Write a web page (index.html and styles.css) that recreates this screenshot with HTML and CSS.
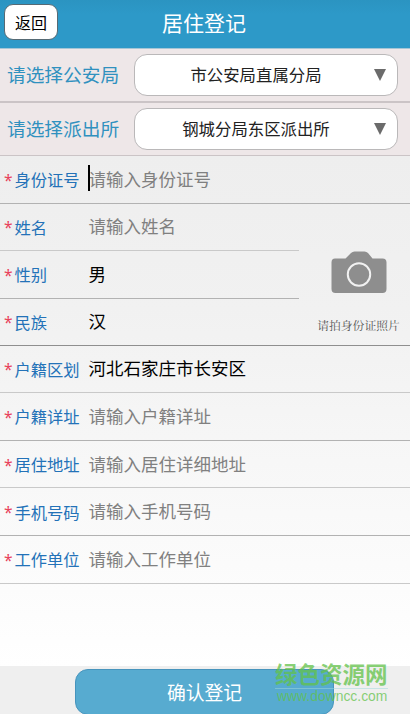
FILE: index.html
```html
<!DOCTYPE html>
<html lang="zh-CN">
<head>
<meta charset="utf-8">
<title>居住登记</title>
<link rel="stylesheet" href="styles.css">
</head>
<body>
<header class="bar"><button class="back">返回</button><h1>居住登记</h1></header>
<section class="choices">
  <div class="choice"><span class="choice-label">请选择公安局</span><div class="select"><span>市公安局直属分局</span><i class="arrow"></i></div></div>
  <div class="choice"><span class="choice-label">请选择派出所</span><div class="select"><span>钢城分局东区派出所</span><i class="arrow"></i></div></div>
</section>
<main class="form">
  <div class="row"><b>*</b><label>身份证号</label><span class="hint focused">请输入身份证号</span></div>
  <div class="person">
    <div class="fields">
      <div class="row light"><b>*</b><label>姓名</label><span class="hint">请输入姓名</span></div>
      <div class="row"><b>*</b><label>性别</label><span>男</span></div>
      <div class="row last"><b>*</b><label>民族</label><span>汉</span></div>
    </div>
    <div class="photo">
      <svg class="camera" viewBox="0 0 56 43"><path fill="#8e8e8e" d="M4 7.500h10.500l5.500-5.500q1.500-1.500 3.500-1.500h10q2 0 3.500 1.500L41.500 7.500H51.500q4 0 4 4V38q0 4-4 4H4.500q-4 0-4-4V11.500q0-4 3.500-4Z"/><circle cx="28" cy="23.500" r="11.200" fill="none" stroke="#f1f1f1" stroke-width="2"/></svg>
      <span class="caption">请拍身份证照片</span>
    </div>
  </div>
  <div class="row light"><b>*</b><label>户籍区划</label><span>河北石家庄市长安区</span></div>
  <div class="row"><b>*</b><label>户籍详址</label><span class="hint">请输入户籍详址</span></div>
  <div class="row light"><b>*</b><label>居住地址</label><span class="hint">请输入居住详细地址</span></div>
  <div class="row"><b>*</b><label>手机号码</label><span class="hint">请输入手机号码</span></div>
  <div class="row light"><b>*</b><label>工作单位</label><span class="hint">请输入工作单位</span></div>
</main>
<footer class="footer"><button class="submit">确认登记</button></footer>
<div class="mark"><strong>绿色资源网</strong><span>www.downcc.com</span></div>
</body>
</html>
```
FILE: styles.css
```css
* { box-sizing: border-box; }
body {
  margin: 0;
  height: 714px;
  overflow: hidden;
  position: relative;
  display: flex;
  flex-direction: column;
  font-family: "Noto Sans CJK SC", sans-serif;
  white-space: nowrap;
  background: #fff;
}
button { font-family: inherit; padding: 0; }
.bar {
  height: 49px;
  flex: none;
  display: grid;
  grid-template-columns: 58px 1fr 64px;
  align-items: start;
  padding-left: 4px;
  background: linear-gradient(#2b94c1, #2d99c8 30%, #2d99c8);
  border-bottom: 1px solid #a5c6d6;
}
.back {
  width: 54px;
  height: 36px;
  margin-top: 4px;
  border: 1px solid #566a74;
  border-radius: 9px;
  background: #fff;
  font-size: 16px;
  line-height: 34px;
  color: #000;
}
h1 {
  margin: 0;
  text-align: center;
  font-size: 21px;
  font-weight: 400;
  line-height: 45px;
  color: #fff;
}
.choices { background: #eee7e8; flex: none; }
.choice {
  height: 53.5px;
  padding-left: 7px;
  display: flex;
  align-items: center;
  border-bottom: 2px solid #cbc4c6;
}
.choice:last-child { border-bottom-width: 1px; }
.choice-label { width: 127px; font-size: 18.7px; line-height: 30px; padding-bottom: 2px; color: #3091bf; }
.select {
  position: relative;
  width: 264px;
  height: 42px;
  border: 1px solid #bab8b9;
  border-radius: 13px;
  background: #fff;
  text-align: center;
  font-size: 16.4px;
  line-height: 39px;
  color: #222;
  padding-right: 20px;
}
.arrow {
  position: absolute;
  right: 11px;
  top: 14px;
  border: 6.5px solid transparent;
  border-top: 12px solid #6b6b6b;
  border-bottom: 0;
}
.form {
  flex: 1;
  background: linear-gradient(#eeeeee, #f1f1f1 30%, #fafafa 75%, #ffffff);
}
.row {
  height: 47.6px;
  display: grid;
  grid-template-columns: 10px 74px 1fr;
  align-items: center;
  padding-left: 4.5px;
  border-bottom: 1px solid #b2b2b2;
  font-size: 17.5px;
  line-height: 28px;
  color: #000;
}
.row.light { border-color: #c9c9c9; }
.row b { font: 400 15.5px/28px "Noto Sans", sans-serif; padding-top: 1px; margin-left: -.5px; color: #e8415b; }
.row label { font-size: 16.3px; color: #2372b8; }
.row > span { padding-bottom: 1px; }
.hint { color: #808080; }
.focused { position: relative; }
.focused::before {
  content: "";
  position: absolute;
  left: -.5px;
  top: 0;
  width: 1.5px;
  height: 26px;
  background: #000;
}
.person { display: flex; border-bottom: 1px solid #8f8f8f; height: 142px; }
.fields { width: 299px; }
.row.last { border: 0; height: 46px; }
.photo { flex: 1; display: flex; flex-direction: column; align-items: center; padding: 47.5px 0 0 8px; }
.camera { width: 56px; height: 43px; flex: none; }
.caption {
  margin-top: 21px;
  font-family: "Noto Serif CJK SC", "Noto Sans CJK SC", serif;
  font-size: 11.8px;
  line-height: 20px;
  color: #555;
}
.footer { height: 48px; flex: none; padding: 3px 0 0 75px; background: #efefef; }
.submit {
  display: block;
  width: 259px;
  height: 46px;
  border: 1px solid #4794bd;
  border-radius: 13px;
  background: #57abd0;
  color: #fff;
  font-size: 18.8px;
  line-height: 44px;
}
.mark {
  position: absolute;
  left: 275px;
  top: 660px;
  width: 113px;
  color: rgba(98, 194, 73, .75);
}
.mark strong { display: block; height: 29px; font-size: 22.5px; font-weight: 700; line-height: 26px; border-bottom: 1px solid rgba(160, 215, 220, .5); }
.mark span { display: block; padding-left: 2px; font: 13.9px/14px "Liberation Sans", sans-serif; }
```
